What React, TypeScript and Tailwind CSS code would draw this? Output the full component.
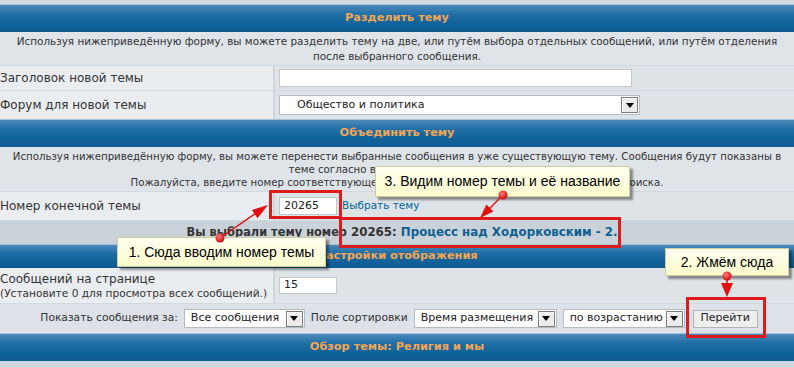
import React from 'react'

// phpBB subSilver-like moderator page with tutorial callouts on top

const Th: React.FC<{ className?: string; children: React.ReactNode }> = ({ className = '', children }) => (
  <div
    className={`flex items-center justify-center border-t border-[#a7c2d8] bg-[linear-gradient(to_bottom,#4d8aba,#1f6ea6_35%,#12629a_70%,#0d5a8f)] text-[11.3px] font-bold text-[#f2a654] ${className}`}
  >
    {children}
  </div>
)

const Arrow: React.FC = () => (
  <span className="flex h-[16px] w-[17px] items-center justify-center border border-[#7d7d7d] bg-[#ececec] shadow-[inset_1px_1px_0_#fff]">
    <svg width="8" height="5" viewBox="0 0 8 5">
      <path d="M0 0h8L4 5z" fill="#000" />
    </svg>
  </span>
)

const Select: React.FC<{ className?: string; text: string; pad?: string }> = ({ className = '', text, pad = 'pl-[6px]' }) => (
  <div className={`flex h-[19px] items-center justify-between border border-[#b5bcc2] bg-white pr-[1px] ${className}`}>
    <span className={`whitespace-nowrap text-[11px] text-[#222] ${pad}`}>{text}</span>
    <Arrow />
  </div>
)

const Callout: React.FC<{ className: string; children: React.ReactNode }> = ({ className, children }) => (
  <div
    className={`absolute flex items-center justify-center border border-[#cfcca2] bg-[linear-gradient(to_bottom,#fffff0,#fdfbcc)] font-['Liberation_Sans',Arial,sans-serif] text-[14px] text-black shadow-[3px_3px_2px_rgba(0,0,0,0.4)] ${className}`}
  >
    {children}
  </div>
)

export default function App() {
  return (
    <div className="relative h-[367px] w-[794px] overflow-hidden bg-[#d0d9e0] pt-[4px] font-['DejaVu_Sans',Verdana,sans-serif] text-[#333]">
      <Th className="h-[28px]">Разделить тему</Th>
      <div className="flex h-[33px] flex-col items-center justify-center bg-[#dfe4e9] text-[10.4px] leading-[15px] whitespace-nowrap">
        <span>Используя нижеприведённую форму, вы можете разделить тему на две, или путём выбора отдельных сообщений, или путём отделения</span>
        <span>после выбранного сообщения.</span>
      </div>
      <div className="mt-px flex h-[24px]">
        <div className="flex w-[273px] items-center bg-[#eaedf0] text-[12px]">Заголовок новой темы</div>
        <div className="flex flex-1 items-center border-l-2 border-[#cfd6dc] bg-[#dee3e7] pl-[4px]">
          <div className="h-[18px] w-[353px] border border-[#c2c8cd] bg-white" />
        </div>
      </div>
      <div className="mt-px flex h-[28px]">
        <div className="flex w-[273px] items-center bg-[#eaedf0] text-[12px]">Форум для новой темы</div>
        <div className="flex flex-1 items-center border-l-2 border-[#cfd6dc] bg-[#dee3e7] pl-[4px]">
          <Select className="w-[361px] h-[20px]" text="Общество и политика" pad="pl-[17px]" />
        </div>
      </div>

      <Th className="h-[28px]">Объединить тему</Th>
      <div className="flex h-[44px] flex-col items-center justify-center bg-[#dfe4e9] text-[10.2px] leading-[13px] whitespace-nowrap">
        <span>Используя нижеприведённую форму, вы можете перенести выбранные сообщения в уже существующую тему. Сообщения будут показаны в</span>
        <span>теме согласно времени их размещения.</span>
        <span>Пожалуйста, введите номер соответствующей темы или нажмите «Выбрать тему» для её поиска.</span>
      </div>
      <div className="mt-px flex h-[28px]">
        <div className="flex w-[273px] items-center bg-[#eaedf0] text-[12px]">Номер конечной темы</div>
        <div className="flex flex-1 items-center gap-[5px] border-l-2 border-[#cfd6dc] bg-[#dee3e7] pl-[4px]">
          <div className="flex h-[18px] w-[58px] items-center border border-[#c2c8cd] bg-white pl-[4px] text-[11px] text-[#222]">20265</div>
          <span className="text-[10.5px] text-[#006699]">Выбрать тему</span>
        </div>
      </div>
      <div className="mt-px flex h-[23px] items-center justify-center bg-[#c9d1d9] pl-[10px] font-bold">
        <span className="text-[11.4px]">Вы выбрали тему номер&nbsp;</span>
        <span className="text-[11.8px]">20265:&nbsp;</span>
        <span className="text-[11.8px] text-[#0f5f8f]">Процесс над Ходорковским - 2.</span>
      </div>

      <Th className="h-[24px]">Настройки отображения</Th>
      <div className="flex h-[35px]">
        <div className="flex w-[273px] flex-col justify-center bg-[#eaedf0]">
          <span className="text-[12px] leading-[15px]">Сообщений на странице</span>
          <span className="text-[10.6px] leading-[13px] whitespace-nowrap">(Установите 0 для просмотра всех сообщений.)</span>
        </div>
        <div className="flex flex-1 items-center border-l-2 border-[#cfd6dc] bg-[#dee3e7] pl-[4px]">
          <div className="flex h-[17px] w-[58px] items-center border border-[#c2c8cd] bg-white pl-[4px] text-[11px] text-[#222]">15</div>
        </div>
      </div>
      <div className="mt-px flex h-[29px] items-center justify-center gap-[6px] bg-[#dce2e7] pl-[4px] text-[10.7px]">
        <span>Показать сообщения за:</span>
        <Select className="w-[121px]" text="Все сообщения" />
        <span>Поле сортировки</span>
        <Select className="w-[143px]" text="Время размещения" />
        <Select className="w-[122px]" text="по возрастанию" />
        <div className="ml-[2px] flex h-[18px] w-[65px] items-center justify-center border border-[#b0b4b8] bg-[#eeeeee] text-[11px] text-[#222]">
          Перейти
        </div>
      </div>
      <Th className="h-[28px]">Обзор темы: Религия и мы</Th>

      <Callout className="left-[375px] top-[166px] h-[31px] w-[255px]">3. Видим номер темы и её название</Callout>
      <Callout className="left-[117px] top-[237px] h-[30px] w-[209px]">1. Сюда вводим номер темы</Callout>
      <Callout className="left-[665px] top-[248px] h-[28px] w-[124px]">2. Жмём сюда</Callout>

      <svg className="pointer-events-none absolute inset-0" width="794" height="367">
        <defs>
          <radialGradient id="dot" cx="40%" cy="35%" r="70%">
            <stop offset="0" stopColor="#ff7a7a" />
            <stop offset="1" stopColor="#d20000" />
          </radialGradient>
        </defs>
        <g fill="none" stroke="#de1b1b" strokeWidth="3">
          <rect x="270.5" y="191.5" width="70" height="26" />
          <rect x="340.5" y="218.5" width="279" height="28" />
          <rect x="687.5" y="298.5" width="77" height="38" />
        </g>
        <g stroke="#e01010" strokeWidth="1.5">
          <line x1="220" y1="238" x2="256" y2="213" />
          <line x1="503" y1="195" x2="489" y2="209" />
          <line x1="727" y1="276" x2="727" y2="284" />
        </g>
        <g fill="#e40f0f">
          <polygon points="268,205 257.5,218.2 251.9,209.9" />
          <polygon points="480,218 493.4,211.6 486.4,204.6" />
          <polygon points="721,283 733,283 727,297" />
        </g>
        <circle cx="220" cy="238" r="4.5" fill="url(#dot)" />
        <circle cx="503" cy="195" r="4.5" fill="url(#dot)" />
        <circle cx="727" cy="276" r="4.5" fill="url(#dot)" />
      </svg>
    </div>
  )
}
